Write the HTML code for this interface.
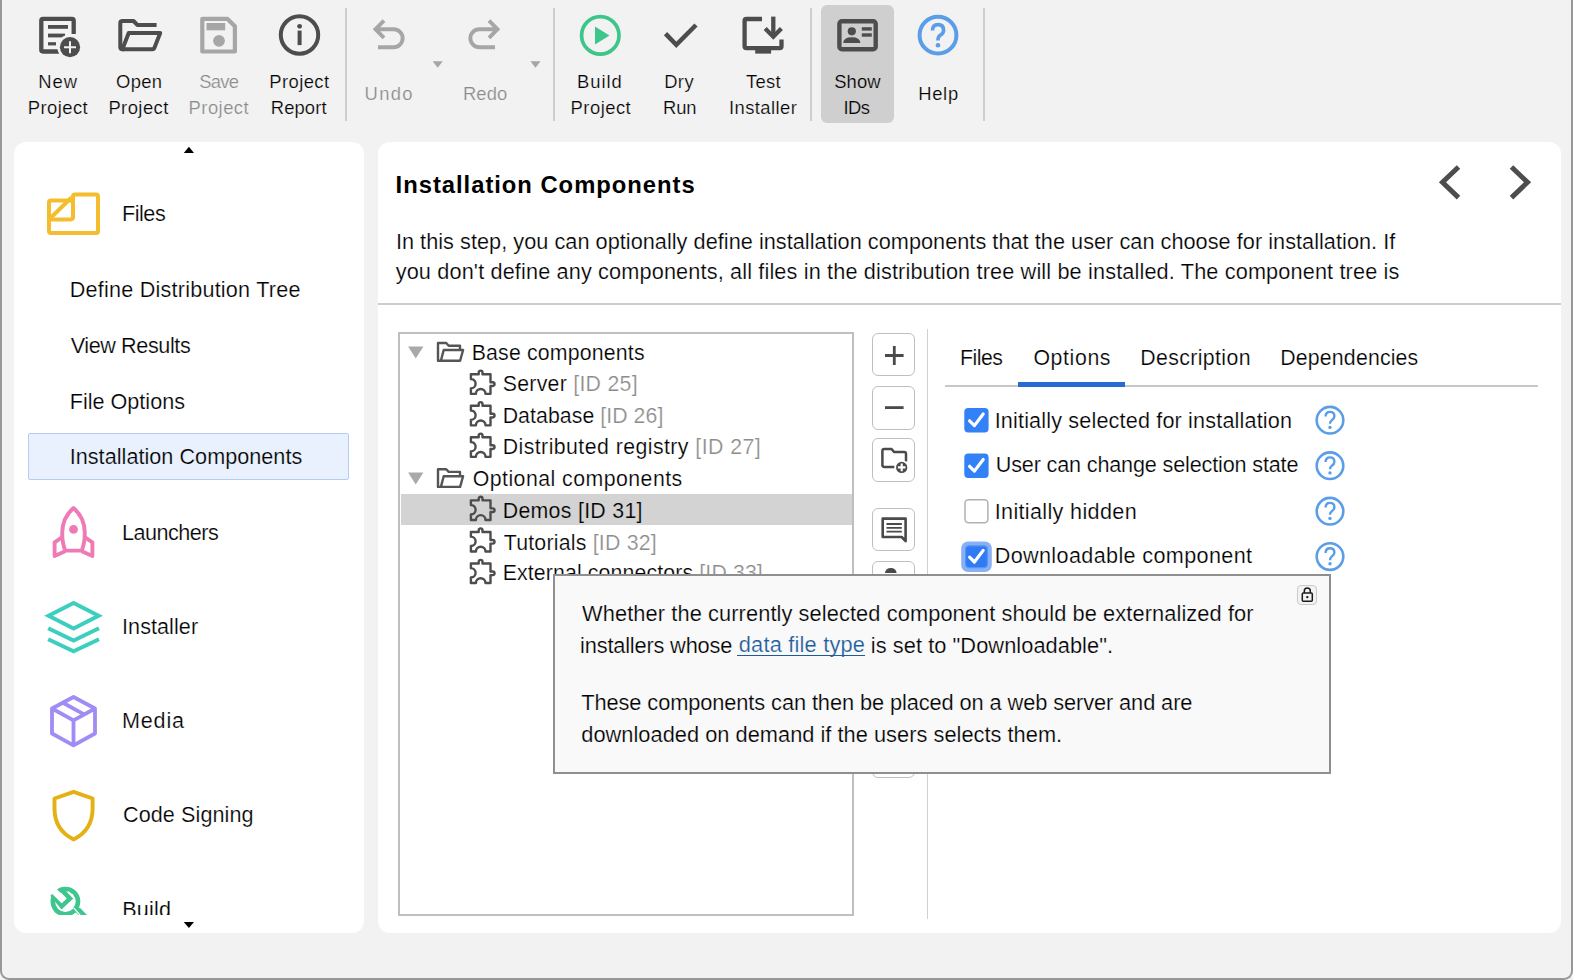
<!DOCTYPE html>
<html><head><meta charset="utf-8"><style>
html,body{margin:0;padding:0;}
body{width:1573px;height:980px;position:relative;overflow:hidden;background:#f2f2f2;font-family:"Liberation Sans",sans-serif;}
.t{position:absolute;white-space:nowrap;}
svg{overflow:visible}
</style></head><body>
<div style="position:absolute;left:821px;top:5px;width:73px;height:117.5px;background:#cfcfcf;border-radius:6px"></div>
<div style="position:absolute;left:344.7px;top:7.7px;width:1.9px;height:113px;background:#cecece"></div>
<div style="position:absolute;left:553px;top:7.7px;width:1.9px;height:113px;background:#cecece"></div>
<div style="position:absolute;left:810px;top:7.7px;width:1.9px;height:113px;background:#cecece"></div>
<div style="position:absolute;left:983.3px;top:7.7px;width:1.9px;height:113px;background:#cecece"></div>
<div class="t" id="t0" style="left:38.20px;top:72.82px;font-size:18.4px;line-height:18.4px;color:#000;letter-spacing:1.050px;-webkit-text-stroke:0.22px #f2f2f2;">New</div>
<div class="t" id="t1" style="left:27.80px;top:99.22px;font-size:18.4px;line-height:18.4px;color:#000;letter-spacing:0.450px;-webkit-text-stroke:0.22px #f2f2f2;">Project</div>
<div class="t" id="t2" style="left:116.00px;top:72.82px;font-size:18.4px;line-height:18.4px;color:#000;letter-spacing:0.367px;-webkit-text-stroke:0.22px #f2f2f2;">Open</div>
<div class="t" id="t3" style="left:108.40px;top:99.22px;font-size:18.4px;line-height:18.4px;color:#000;letter-spacing:0.450px;-webkit-text-stroke:0.22px #f2f2f2;">Project</div>
<div class="t" id="t4" style="left:199.20px;top:72.82px;font-size:18.4px;line-height:18.4px;color:#8a8a8a;letter-spacing:-0.700px;-webkit-text-stroke:0.22px #f2f2f2;">Save</div>
<div class="t" id="t5" style="left:188.60px;top:99.22px;font-size:18.4px;line-height:18.4px;color:#8a8a8a;letter-spacing:0.467px;-webkit-text-stroke:0.22px #f2f2f2;">Project</div>
<div class="t" id="t6" style="left:269.20px;top:72.82px;font-size:18.4px;line-height:18.4px;color:#000;letter-spacing:0.450px;-webkit-text-stroke:0.22px #f2f2f2;">Project</div>
<div class="t" id="t7" style="left:270.80px;top:99.22px;font-size:18.4px;line-height:18.4px;color:#000;letter-spacing:0.100px;-webkit-text-stroke:0.22px #f2f2f2;">Report</div>
<div class="t" id="t8" style="left:364.60px;top:84.82px;font-size:18.4px;line-height:18.4px;color:#8a8a8a;letter-spacing:1.333px;-webkit-text-stroke:0.22px #f2f2f2;">Undo</div>
<div class="t" id="t9" style="left:463.00px;top:84.82px;font-size:18.4px;line-height:18.4px;color:#8a8a8a;letter-spacing:0.067px;-webkit-text-stroke:0.22px #f2f2f2;">Redo</div>
<div class="t" id="t10" style="left:577.00px;top:72.82px;font-size:18.4px;line-height:18.4px;color:#000;letter-spacing:0.975px;-webkit-text-stroke:0.22px #f2f2f2;">Build</div>
<div class="t" id="t11" style="left:570.60px;top:99.22px;font-size:18.4px;line-height:18.4px;color:#000;letter-spacing:0.483px;-webkit-text-stroke:0.22px #f2f2f2;">Project</div>
<div class="t" id="t12" style="left:664.20px;top:72.82px;font-size:18.4px;line-height:18.4px;color:#000;letter-spacing:0.400px;-webkit-text-stroke:0.22px #f2f2f2;">Dry</div>
<div class="t" id="t13" style="left:663.00px;top:99.22px;font-size:18.4px;line-height:18.4px;color:#000;letter-spacing:-0.100px;-webkit-text-stroke:0.22px #f2f2f2;">Run</div>
<div class="t" id="t14" style="left:746.00px;top:72.82px;font-size:18.4px;line-height:18.4px;color:#000;letter-spacing:0.333px;-webkit-text-stroke:0.22px #f2f2f2;">Test</div>
<div class="t" id="t15" style="left:729.00px;top:99.22px;font-size:18.4px;line-height:18.4px;color:#000;letter-spacing:0.425px;-webkit-text-stroke:0.22px #f2f2f2;">Installer</div>
<div class="t" id="t16" style="left:834.20px;top:72.82px;font-size:18.4px;line-height:18.4px;color:#000;letter-spacing:0.100px;-webkit-text-stroke:0.22px #cfcfcf;">Show</div>
<div class="t" id="t17" style="left:843.40px;top:99.22px;font-size:18.4px;line-height:18.4px;color:#000;letter-spacing:-0.550px;-webkit-text-stroke:0.22px #cfcfcf;">IDs</div>
<div class="t" id="t18" style="left:918.20px;top:84.82px;font-size:18.4px;line-height:18.4px;color:#000;letter-spacing:0.700px;-webkit-text-stroke:0.22px #f2f2f2;">Help</div>

<svg style="position:absolute;left:0;top:0" width="1000" height="70">
 <!-- new project -->
 <g fill="none" stroke="#4d4d4d" stroke-width="4.3">
  <path d="M59,51.5 H43 Q41.3,51.5 41.3,49.8 V20.6 Q41.3,18.9 43,18.9 H72 Q73.7,18.9 73.7,20.6 V34"/>
 </g>
 <g fill="#4d4d4d">
  <rect x="48" y="25" width="20" height="3.8"/>
  <rect x="48" y="33.6" width="17" height="3.8"/>
  <rect x="48" y="42.2" width="8" height="3.2"/>
  <circle cx="70" cy="47.2" r="12.6" fill="#f2f2f2"/>
  <circle cx="70" cy="47.2" r="10.1"/>
 </g>
 <path d="M70,41.2 V53.2 M64,47.2 H76" stroke="#f2f2f2" stroke-width="2"/>
 <!-- open project -->
 <g fill="none" stroke="#4d4d4d" stroke-width="4" stroke-linejoin="round">
  <path d="M124,49.2 H122.6 Q120.3,49.2 120.3,47 V23.2 Q120.3,21 122.5,21 H133.5 L137.3,24.9 H156.6"/>
  <path d="M122.4,49.2 L128.7,33 H160.2 L154.6,47.4 Q154,49.2 152.2,49.2 Z"/>
 </g>
 <!-- save -->
 <g fill="none" stroke="#a6a6a6" stroke-width="4.2" stroke-linejoin="round">
  <path d="M202.3,18.9 H227.5 L234.9,26.3 V51.5 H202.3 Z"/>
 </g>
 <rect x="206.5" y="23" width="18.7" height="7.3" fill="#a6a6a6"/>
 <circle cx="219" cy="40.8" r="5.9" fill="#a6a6a6"/>
 <!-- info -->
 <circle cx="299.5" cy="35" r="18.7" fill="none" stroke="#4d4d4d" stroke-width="4"/>
 <circle cx="299.6" cy="26.3" r="2.4" fill="#4d4d4d"/>
 <rect x="297.6" y="30.6" width="4" height="14.5" fill="#4d4d4d"/>
 <!-- undo -->
 <g fill="none" stroke="#a6a6a6" stroke-width="3.9">
  <path d="M384,20.6 L375.5,29.2 L384,37.8"/>
  <path d="M376,29.2 H393.6 A9.05,9.05 0 0 1 393.6,47.3 H378"/>
 </g>
 <path d="M432.6,61.3 H442.8 L437.7,67.8 Z" fill="#a6a6a6"/>
 <!-- redo -->
 <g fill="none" stroke="#a6a6a6" stroke-width="3.9">
  <path d="M489,20.6 L497.5,29.2 L489,37.8"/>
  <path d="M497,29.2 H479.4 A9.05,9.05 0 0 0 479.4,47.3 H495"/>
 </g>
 <path d="M530.4,61.3 H540.6 L535.5,67.8 Z" fill="#a6a6a6"/>
 <!-- build -->
 <circle cx="600.3" cy="35.4" r="18.7" fill="none" stroke="#3dc68b" stroke-width="3.7"/>
 <path d="M595,26.4 V44.4 L609.5,35.4 Z" fill="#3dc68b"/>
 <!-- dry run -->
 <path d="M665.5,33.6 L676.3,44.8 L696,25" fill="none" stroke="#4d4d4d" stroke-width="4.5"/>
 <!-- test installer -->
 <g fill="none" stroke="#4d4d4d" stroke-width="4.3">
  <path d="M762,19 H746.5 Q744.6,19 744.6,21 V46.3 Q744.6,48.2 746.5,48.2 H779.6 Q781.5,48.2 781.5,46.3 V39.5"/>
  <path d="M773.3,16.6 V36"/>
  <path d="M765.2,28.6 L773.3,36.7 L781.4,28.6"/>
 </g>
 <rect x="755.2" y="48" width="15.9" height="5.6" fill="#4d4d4d"/>
 <!-- show ids -->
 <rect x="839.4" y="21.2" width="36.3" height="28.1" rx="2.5" fill="none" stroke="#4d4d4d" stroke-width="4.4"/>
 <circle cx="851.8" cy="31.3" r="4.1" fill="#4d4d4d"/>
 <path d="M843.2,42.9 Q843.5,37.2 851.8,37.2 Q860,37.2 860.4,42.9 Z" fill="#4d4d4d"/>
 <rect x="861.8" y="27.2" width="10" height="3.4" fill="#4d4d4d"/>
 <rect x="861.8" y="33.3" width="10" height="3.4" fill="#4d4d4d"/>
 <!-- help -->
 <circle cx="938" cy="35.2" r="18.4" fill="none" stroke="#5a9de8" stroke-width="4"/>
 <path d="M932.5,30.5 Q932.5,24.6 938,24.6 Q943.6,24.6 943.6,30.2 Q943.6,33.4 940.3,35.2 Q938,36.6 938,39.6 V40.6" fill="none" stroke="#5a9de8" stroke-width="3.6"/>
 <circle cx="938" cy="45.3" r="2.3" fill="#5a9de8"/>
</svg>
<div style="position:absolute;left:13.5px;top:141.5px;width:350.5px;height:791.6px;background:#fff;border-radius:12px"></div>
<div style="position:absolute;left:378px;top:141.5px;width:1183px;height:791.6px;background:#fff;border-radius:12px"></div>
<svg style="position:absolute;left:0;top:0" width="370" height="980"><path d="M183.8,152.9 H194 L188.9,146.8 Z" fill="#000"/><path d="M183.8,922.1 H194 L188.9,928 Z" fill="#000"/></svg>
<div style="position:absolute;left:28.2px;top:432.5px;width:318.4px;height:45px;background:#e8f1fd;border:1.3px solid #b5cdf1;border-radius:2px"></div>
<div class="t" id="t19" style="left:122.00px;top:203.12px;font-size:21.6px;line-height:21.6px;color:#000;letter-spacing:-0.475px;-webkit-text-stroke:0.22px #fff;">Files</div>
<div class="t" id="t20" style="left:69.70px;top:278.92px;font-size:21.6px;line-height:21.6px;color:#000;letter-spacing:0.222px;-webkit-text-stroke:0.22px #fff;">Define Distribution Tree</div>
<div class="t" id="t21" style="left:70.70px;top:334.62px;font-size:21.6px;line-height:21.6px;color:#000;letter-spacing:-0.400px;-webkit-text-stroke:0.22px #fff;">View Results</div>
<div class="t" id="t22" style="left:69.70px;top:390.62px;font-size:21.6px;line-height:21.6px;color:#000;letter-spacing:0.009px;-webkit-text-stroke:0.22px #fff;">File Options</div>
<div class="t" id="t23" style="left:69.70px;top:446.22px;font-size:21.6px;line-height:21.6px;color:#000;letter-spacing:0.041px;-webkit-text-stroke:0.22px #e8f1fd;">Installation Components</div>
<div class="t" id="t24" style="left:122.00px;top:521.92px;font-size:21.6px;line-height:21.6px;color:#000;letter-spacing:-0.512px;-webkit-text-stroke:0.22px #fff;">Launchers</div>
<div class="t" id="t25" style="left:122.00px;top:615.72px;font-size:21.6px;line-height:21.6px;color:#000;letter-spacing:0.062px;-webkit-text-stroke:0.22px #fff;">Installer</div>
<div class="t" id="t26" style="left:122.00px;top:710.32px;font-size:21.6px;line-height:21.6px;color:#000;letter-spacing:0.800px;-webkit-text-stroke:0.22px #fff;">Media</div>
<div class="t" id="t27" style="left:123.00px;top:804.12px;font-size:21.6px;line-height:21.6px;color:#000;letter-spacing:0.082px;-webkit-text-stroke:0.22px #fff;">Code Signing</div>
<div style="position:absolute;left:0;top:860px;width:360px;height:55px;overflow:hidden"><div class="t" id="t28" style="left:122.20px;top:38.72px;font-size:21.6px;line-height:21.6px;color:#000;letter-spacing:0.200px;-webkit-text-stroke:0.22px #f2f2f2;">Build</div>
</div>

<svg style="position:absolute;left:0;top:0" width="370" height="980">
 <!-- files -->
 <g fill="none" stroke="#f4bd2e" stroke-width="4" stroke-linejoin="round">
  <path d="M73,201 V196.5 Q73,194.6 75,194.6 H96 Q98,194.6 98,196.5 V231 Q98,233 96,233 H51 Q49,233 49,231 V202.6 Q49,200.6 51,200.6 H70.6 Q73,200.6 73,203 V217 Q73,219.4 70.6,219.4 H49.5"/>
  <path d="M50.5,218 L71.5,197.5"/>
 </g>
 <!-- rocket -->
 <g fill="none" stroke="#ee7ab6" stroke-width="3.9" stroke-linejoin="round">
  <path d="M73.5,508 C66.5,514 62.2,522 62.2,533 C62.2,540 63.4,546 65.2,550.6 H81.8 C83.6,546 84.8,540 84.8,533 C84.8,522 80.5,514 73.5,508 Z"/>
  <path d="M62.3,537.2 L54.6,542.3 V556 L65.2,551.2"/>
  <path d="M84.7,537.2 L92.4,542.3 V556 L81.8,551.2"/>
 </g>
 <circle cx="73.5" cy="529.4" r="4.4" fill="#ee7ab6"/>
 <!-- layers -->
 <g fill="none" stroke="#3ccfbf" stroke-width="4" stroke-linejoin="miter" stroke-miterlimit="10">
  <path d="M73.6,603 L98.6,615.8 L73.6,628.6 L48.6,615.8 Z"/>
  <path d="M48.2,628.3 L73.6,640.6 L99,628.3"/>
  <path d="M48.2,639.3 L73.6,651.3 L99,639.3"/>
 </g>
 <!-- box -->
 <g fill="none" stroke="#a08cf4" stroke-width="3.8" stroke-linejoin="round">
  <path d="M73.5,697 L95,708.5 V733.5 L73.5,745.3 L52,733.5 V708.5 Z"/>
  <path d="M52,708.5 L73.5,720.3 L95,708.5 M73.5,720.3 V745.3"/>
  <path d="M62.5,702.5 L84,714.3"/>
 </g>
 <!-- shield -->
 <path d="M73.6,791.8 L92.6,798.5 V808.5 Q92.6,830 73.6,839.4 Q54.5,830 54.5,808.5 V798.5 Z" fill="none" stroke="#e4b012" stroke-width="3.9" stroke-linejoin="round"/>
</svg>
<div style="position:absolute;left:40px;top:880px;width:60px;height:34.8px;overflow:hidden"><svg width="60" height="50" viewBox="40 880 60 50" style="display:block"><circle cx="65.4" cy="901.6" r="14.9" fill="#3ec68e"/><circle cx="65.4" cy="901.6" r="10.3" fill="#fff"/><path d="M52,894.2 L61.7,906.1 L70,898.4 L60.5,888.8" fill="none" stroke="#3ec68e" stroke-width="4.6" stroke-linejoin="miter"/><path d="M45,881.4 L57.2,889.4 L66.2,898.8 L61.7,903.3 L52.3,894.1 L40,888 Z" fill="#fff"/><path d="M68.3,891.6 L73.6,897.9" stroke="#fff" stroke-width="1.3"/><path d="M79.9,907.8 L88,916 H79 L73.6,909.6 Z" fill="#3ec68e"/><path d="M73.6,907.9 L80.5,915.6" stroke="#fff" stroke-width="1.3"/></svg></div>
<div class="t" id="t29" style="left:395.60px;top:172.95px;font-size:23.8px;line-height:23.8px;color:#000;letter-spacing:0.973px;font-weight:bold;">Installation Components</div>
<svg style="position:absolute;left:1430px;top:160px" width="110" height="45"><path d="M28.5,7 L12.5,22.3 L28.5,37.6" fill="none" stroke="#4d4d4d" stroke-width="5"/><path d="M81.5,7 L97.5,22.3 L81.5,37.6" fill="none" stroke="#4d4d4d" stroke-width="5"/></svg>
<div class="t" id="t30" style="left:395.90px;top:230.83px;font-size:21.7px;line-height:21.7px;color:#000;letter-spacing:0.033px;-webkit-text-stroke:0.22px #fff;">In this step, you can optionally define installation components that the user can choose for installation. If</div>
<div class="t" id="t31" style="left:395.70px;top:261.43px;font-size:21.7px;line-height:21.7px;color:#000;letter-spacing:0.140px;-webkit-text-stroke:0.22px #fff;">you don't define any components, all files in the distribution tree will be installed. The component tree is</div>
<div style="position:absolute;left:378px;top:303px;width:1183px;height:2px;background:#cdcdcd"></div>
<div style="position:absolute;left:398px;top:332px;width:452px;height:580px;border:2px solid #bfbfbf;background:#fff"></div>
<div style="position:absolute;left:400.5px;top:494px;width:451.5px;height:31px;background:#d3d3d3"></div>
<div class="t" id="t32" style="left:471.70px;top:343.37px;font-size:21.3px;line-height:21.3px;color:#000;letter-spacing:0.171px;-webkit-text-stroke:0.22px #fff;">Base components</div>
<div class="t" id="t33" style="left:502.70px;top:374.07px;font-size:21.3px;line-height:21.3px;color:#000;letter-spacing:0.269px;-webkit-text-stroke:0.22px #fff;">Server <span style="color:#8c8c8c">[ID 25]</span></div>
<div class="t" id="t34" style="left:502.70px;top:405.77px;font-size:21.3px;line-height:21.3px;color:#000;letter-spacing:0.053px;-webkit-text-stroke:0.22px #fff;">Database <span style="color:#8c8c8c">[ID 26]</span></div>
<div class="t" id="t35" style="left:502.70px;top:437.47px;font-size:21.3px;line-height:21.3px;color:#000;letter-spacing:0.437px;-webkit-text-stroke:0.22px #fff;">Distributed registry <span style="color:#8c8c8c">[ID 27]</span></div>
<div class="t" id="t36" style="left:472.70px;top:469.17px;font-size:21.3px;line-height:21.3px;color:#000;letter-spacing:0.461px;-webkit-text-stroke:0.22px #fff;">Optional components</div>
<div class="t" id="t37" style="left:502.70px;top:500.87px;font-size:21.3px;line-height:21.3px;color:#000;letter-spacing:0.308px;-webkit-text-stroke:0.22px #d3d3d3;">Demos <span style="color:#000">[ID 31]</span></div>
<div class="t" id="t38" style="left:503.70px;top:532.57px;font-size:21.3px;line-height:21.3px;color:#000;letter-spacing:0.219px;-webkit-text-stroke:0.22px #fff;">Tutorials <span style="color:#8c8c8c">[ID 32]</span></div>
<div class="t" id="t39" style="left:502.70px;top:563.27px;font-size:21.3px;line-height:21.3px;color:#000;letter-spacing:0.123px;-webkit-text-stroke:0.22px #fff;">External connectors <span style="color:#8c8c8c">[ID 33]</span></div>
<svg style="position:absolute;left:0;top:0" width="900" height="700"><path d="M408.1,346.4 H423.4 L415.75,358.4 Z" fill="#a9a9a9"/><g transform="translate(436.7,341.7)" fill="none" stroke="#555" stroke-width="2.4" stroke-linejoin="round"><path d="M4,19 H1.3 V1.3 H9.5 L12,4 H23.3 V8.2"/><path d="M4.2,19 L7,8.3 H26.4 L23.4,19 Z"/></g><g transform="translate(469.2,369.8)" fill="none" stroke="#4d4d4d" stroke-width="2.4" stroke-linejoin="round"><path d="M1.7,4.45 H9.5 V2.75 A1.9,1.9 0 0 1 13.3,2.75 V4.45 H21.3 V12.45 H23.5 A1.85,1.85 0 0 1 23.5,16.15 H21.3 V24.05 H16.3 A4.8,4.8 0 0 0 6.7,24.05 H1.7 V18.55 A4.7,4.7 0 0 0 1.7,9.15 Z"/></g><g transform="translate(469.2,401.3)" fill="none" stroke="#4d4d4d" stroke-width="2.4" stroke-linejoin="round"><path d="M1.7,4.45 H9.5 V2.75 A1.9,1.9 0 0 1 13.3,2.75 V4.45 H21.3 V12.45 H23.5 A1.85,1.85 0 0 1 23.5,16.15 H21.3 V24.05 H16.3 A4.8,4.8 0 0 0 6.7,24.05 H1.7 V18.55 A4.7,4.7 0 0 0 1.7,9.15 Z"/></g><g transform="translate(469.2,432.8)" fill="none" stroke="#4d4d4d" stroke-width="2.4" stroke-linejoin="round"><path d="M1.7,4.45 H9.5 V2.75 A1.9,1.9 0 0 1 13.3,2.75 V4.45 H21.3 V12.45 H23.5 A1.85,1.85 0 0 1 23.5,16.15 H21.3 V24.05 H16.3 A4.8,4.8 0 0 0 6.7,24.05 H1.7 V18.55 A4.7,4.7 0 0 0 1.7,9.15 Z"/></g><path d="M408.1,472.6 H423.4 L415.75,484.6 Z" fill="#a9a9a9"/><g transform="translate(436.7,467.9)" fill="none" stroke="#555" stroke-width="2.4" stroke-linejoin="round"><path d="M4,19 H1.3 V1.3 H9.5 L12,4 H23.3 V8.2"/><path d="M4.2,19 L7,8.3 H26.4 L23.4,19 Z"/></g><g transform="translate(469.2,495.9)" fill="none" stroke="#4d4d4d" stroke-width="2.4" stroke-linejoin="round"><path d="M1.7,4.45 H9.5 V2.75 A1.9,1.9 0 0 1 13.3,2.75 V4.45 H21.3 V12.45 H23.5 A1.85,1.85 0 0 1 23.5,16.15 H21.3 V24.05 H16.3 A4.8,4.8 0 0 0 6.7,24.05 H1.7 V18.55 A4.7,4.7 0 0 0 1.7,9.15 Z"/></g><g transform="translate(469.2,527.5)" fill="none" stroke="#4d4d4d" stroke-width="2.4" stroke-linejoin="round"><path d="M1.7,4.45 H9.5 V2.75 A1.9,1.9 0 0 1 13.3,2.75 V4.45 H21.3 V12.45 H23.5 A1.85,1.85 0 0 1 23.5,16.15 H21.3 V24.05 H16.3 A4.8,4.8 0 0 0 6.7,24.05 H1.7 V18.55 A4.7,4.7 0 0 0 1.7,9.15 Z"/></g><g transform="translate(469.2,559.0)" fill="none" stroke="#4d4d4d" stroke-width="2.4" stroke-linejoin="round"><path d="M1.7,4.45 H9.5 V2.75 A1.9,1.9 0 0 1 13.3,2.75 V4.45 H21.3 V12.45 H23.5 A1.85,1.85 0 0 1 23.5,16.15 H21.3 V24.05 H16.3 A4.8,4.8 0 0 0 6.7,24.05 H1.7 V18.55 A4.7,4.7 0 0 0 1.7,9.15 Z"/></g></svg>
<div style="position:absolute;left:871.7px;top:332.9px;width:41px;height:41.6px;border:1.7px solid #bfbfbf;border-radius:6px;background:#fff"></div>
<div style="position:absolute;left:871.7px;top:386.2px;width:41px;height:41.6px;border:1.7px solid #bfbfbf;border-radius:6px;background:#fff"></div>
<div style="position:absolute;left:871.7px;top:438px;width:41px;height:41.6px;border:1.7px solid #bfbfbf;border-radius:6px;background:#fff"></div>
<div style="position:absolute;left:871.7px;top:507.5px;width:41px;height:41.6px;border:1.7px solid #bfbfbf;border-radius:6px;background:#fff"></div>
<div style="position:absolute;left:871.7px;top:560.5px;width:41px;height:41.6px;border:1.7px solid #bfbfbf;border-radius:6px;background:#fff"></div>
<div style="position:absolute;left:871.7px;top:613.8px;width:41px;height:41.6px;border:1.7px solid #bfbfbf;border-radius:6px;background:#fff"></div>
<div style="position:absolute;left:871.7px;top:666.8px;width:41px;height:41.6px;border:1.7px solid #bfbfbf;border-radius:6px;background:#fff"></div>
<div style="position:absolute;left:871.7px;top:734px;width:41px;height:41.6px;border:1.7px solid #bfbfbf;border-radius:6px;background:#fff"></div>
<svg style="position:absolute;left:860px;top:320px" width="70" height="280"><path d="M34.3,26.1 V45 M25,35.5 H43.6" stroke="#4a4a4a" stroke-width="2.8"/><path d="M25,87.6 H43.6" stroke="#4a4a4a" stroke-width="2.8"/><g fill="none" stroke="#4a4a4a" stroke-width="2.5" stroke-linejoin="round"><path d="M34.5,146.9 H24.3 Q22.4,146.9 22.4,145 V130.9 Q22.4,129 24.3,129 H31.5 L34,131.9 H44.3 Q46,131.9 46,133.6 V141.5"/></g><circle cx="41.7" cy="147.4" r="6.4" fill="#4a4a4a" stroke="#fff" stroke-width="1.5"/><path d="M41.7,143.6 V151.2 M37.9,147.4 H45.5" stroke="#fff" stroke-width="2.1"/><g fill="none" stroke="#4a4a4a" stroke-width="2.6" stroke-linejoin="round"><path d="M22.7,198.6 H45.6 V221.2 L41.7,217 H22.7 Z"/></g><path d="M26.5,204 H41.8 M26.5,207.8 H41.8 M26.5,211.7 H41.8" stroke="#4a4a4a" stroke-width="1.8"/><path d="M24.9,253 A6,6 0 0 1 36.7,253" fill="#4a4a4a"/></svg>
<div style="position:absolute;left:926.6px;top:329px;width:1.4px;height:589.6px;background:#d0d0d0"></div>
<div class="t" id="t40" style="left:960.10px;top:347.77px;font-size:21.3px;line-height:21.3px;color:#000;letter-spacing:-0.550px;-webkit-text-stroke:0.22px #fff;">Files</div>
<div class="t" id="t41" style="left:1033.40px;top:347.77px;font-size:21.3px;line-height:21.3px;color:#000;letter-spacing:0.617px;-webkit-text-stroke:0.22px #fff;">Options</div>
<div class="t" id="t42" style="left:1140.20px;top:347.77px;font-size:21.3px;line-height:21.3px;color:#000;letter-spacing:0.380px;-webkit-text-stroke:0.22px #fff;">Description</div>
<div class="t" id="t43" style="left:1280.30px;top:347.77px;font-size:21.3px;line-height:21.3px;color:#000;letter-spacing:0.164px;-webkit-text-stroke:0.22px #fff;">Dependencies</div>
<div style="position:absolute;left:944.7px;top:385px;width:593.6px;height:1.6px;background:#c8c8c8"></div>
<div style="position:absolute;left:1018.2px;top:381.8px;width:107px;height:5px;background:#2a68d4"></div>
<div class="t" id="t44" style="left:994.70px;top:410.12px;font-size:21.6px;line-height:21.6px;color:#000;letter-spacing:0.165px;-webkit-text-stroke:0.22px #fff;">Initially selected for installation</div>
<div class="t" id="t45" style="left:995.70px;top:454.32px;font-size:21.6px;line-height:21.6px;color:#000;letter-spacing:-0.150px;-webkit-text-stroke:0.22px #fff;">User can change selection state</div>
<div class="t" id="t46" style="left:994.70px;top:500.72px;font-size:21.6px;line-height:21.6px;color:#000;letter-spacing:0.340px;-webkit-text-stroke:0.22px #fff;">Initially hidden</div>
<div class="t" id="t47" style="left:994.70px;top:544.92px;font-size:21.6px;line-height:21.6px;color:#000;letter-spacing:0.367px;-webkit-text-stroke:0.22px #fff;">Downloadable component</div>
<svg style="position:absolute;left:0;top:0" width="1573" height="980"><rect x="964.3" y="408.1" width="24.3" height="24.3" rx="4" fill="#3381f6"/><path d="M969.6,420.8 L974.4,425.6 L983.2,414.0" fill="none" stroke="#fff" stroke-width="3.2" stroke-linecap="round" stroke-linejoin="round"/><circle cx="1330" cy="420.2" r="13.3" fill="none" stroke="#5a9de8" stroke-width="2.6"/><path d="M1325.6,416.6 Q1325.6,411.9 1330,411.9 Q1334.4,411.9 1334.4,416.2 Q1334.4,418.6 1331.8,420.2 Q1330,421.4 1330,423.8" fill="none" stroke="#5a9de8" stroke-width="2.4"/><circle cx="1330" cy="427.4" r="1.7" fill="#5a9de8"/><rect x="964.3" y="453.6" width="24.3" height="24.3" rx="4" fill="#3381f6"/><path d="M969.6,466.3 L974.4,471.1 L983.2,459.5" fill="none" stroke="#fff" stroke-width="3.2" stroke-linecap="round" stroke-linejoin="round"/><circle cx="1330" cy="465.7" r="13.3" fill="none" stroke="#5a9de8" stroke-width="2.6"/><path d="M1325.6,462.1 Q1325.6,457.4 1330,457.4 Q1334.4,457.4 1334.4,461.7 Q1334.4,464.1 1331.8,465.7 Q1330,466.9 1330,469.3" fill="none" stroke="#5a9de8" stroke-width="2.4"/><circle cx="1330" cy="472.9" r="1.7" fill="#5a9de8"/><rect x="965" y="499.8" width="22.9" height="22.9" rx="3.5" fill="#fff" stroke="#b1b1b1" stroke-width="1.5"/><circle cx="1330" cy="511.2" r="13.3" fill="none" stroke="#5a9de8" stroke-width="2.6"/><path d="M1325.6,507.6 Q1325.6,502.9 1330,502.9 Q1334.4,502.9 1334.4,507.2 Q1334.4,509.6 1331.8,511.2 Q1330,512.4 1330,514.8" fill="none" stroke="#5a9de8" stroke-width="2.4"/><circle cx="1330" cy="518.4" r="1.7" fill="#5a9de8"/><rect x="961.2" y="541.4" width="30.6" height="30.6" rx="7" fill="#88b0f4"/><rect x="965.6" y="545.8" width="21.8" height="21.8" rx="3.5" fill="#2f7bf6" stroke="#5a93ef" stroke-width="1.2"/><path d="M969.6,557.2 L974.4,562.0 L983.2,550.4" fill="none" stroke="#fff" stroke-width="3.2" stroke-linecap="round" stroke-linejoin="round"/><circle cx="1330" cy="556.6" r="13.3" fill="none" stroke="#5a9de8" stroke-width="2.6"/><path d="M1325.6,553.0 Q1325.6,548.3 1330,548.3 Q1334.4,548.3 1334.4,552.6 Q1334.4,555.0 1331.8,556.6 Q1330,557.8 1330,560.2" fill="none" stroke="#5a9de8" stroke-width="2.4"/><circle cx="1330" cy="563.8" r="1.7" fill="#5a9de8"/></svg>
<div style="position:absolute;left:553px;top:574px;width:774.3px;height:196px;background:#f9f9f9;border:2px solid #8f8f8f"></div>
<div style="position:absolute;left:1297.3px;top:584.8px;width:17.6px;height:18.2px;border:1.3px solid #c9c9c9;border-radius:4px;background:#f3f3f3"></div>
<svg style="position:absolute;left:1290px;top:580px" width="40" height="40"><rect x="12.3" y="12.9" width="10" height="8.4" rx="1" fill="none" stroke="#1a1a1a" stroke-width="1.5"/><path d="M14.3,12.9 V11 A3,3 0 0 1 20.3,11 V12.9" fill="none" stroke="#1a1a1a" stroke-width="1.5"/><circle cx="17.3" cy="17.1" r="1.2" fill="#1a1a1a"/></svg>
<div class="t" id="t48" style="left:582.10px;top:603.25px;font-size:21.8px;line-height:21.8px;color:#000;letter-spacing:0.095px;-webkit-text-stroke:0.22px #f9f9f9;">Whether the currently selected component should be externalized for</div>
<div class="t" id="t49" style="left:580.10px;top:634.55px;font-size:21.8px;line-height:21.8px;color:#000;letter-spacing:-0.186px;-webkit-text-stroke:0.22px #f9f9f9;">installers whose</div>
<div class="t" id="t50" style="left:738.80px;top:634.15px;font-size:21.8px;line-height:21.8px;color:#1d5b9b;letter-spacing:0.194px;-webkit-text-stroke:0.22px #f9f9f9;">data file type</div>
<div style="position:absolute;left:736.9px;top:654.6px;width:128px;height:1.9px;background:#1d5b9b"></div>
<div class="t" id="t51" style="left:870.80px;top:634.95px;font-size:21.8px;line-height:21.8px;color:#000;letter-spacing:0.059px;-webkit-text-stroke:0.22px #f9f9f9;">is set to "Downloadable".</div>
<div class="t" id="t52" style="left:581.30px;top:692.35px;font-size:21.8px;line-height:21.8px;color:#000;letter-spacing:-0.097px;-webkit-text-stroke:0.22px #f9f9f9;">These components can then be placed on a web server and are</div>
<div class="t" id="t53" style="left:581.30px;top:724.25px;font-size:21.8px;line-height:21.8px;color:#000;letter-spacing:0.022px;-webkit-text-stroke:0.22px #f9f9f9;">downloaded on demand if the users selects them.</div>
<div style="position:absolute;left:0;top:-10px;width:1569px;height:988px;border:2px solid #989898;border-top:none;border-radius:0 0 9px 9px;pointer-events:none"></div>
</body></html>
